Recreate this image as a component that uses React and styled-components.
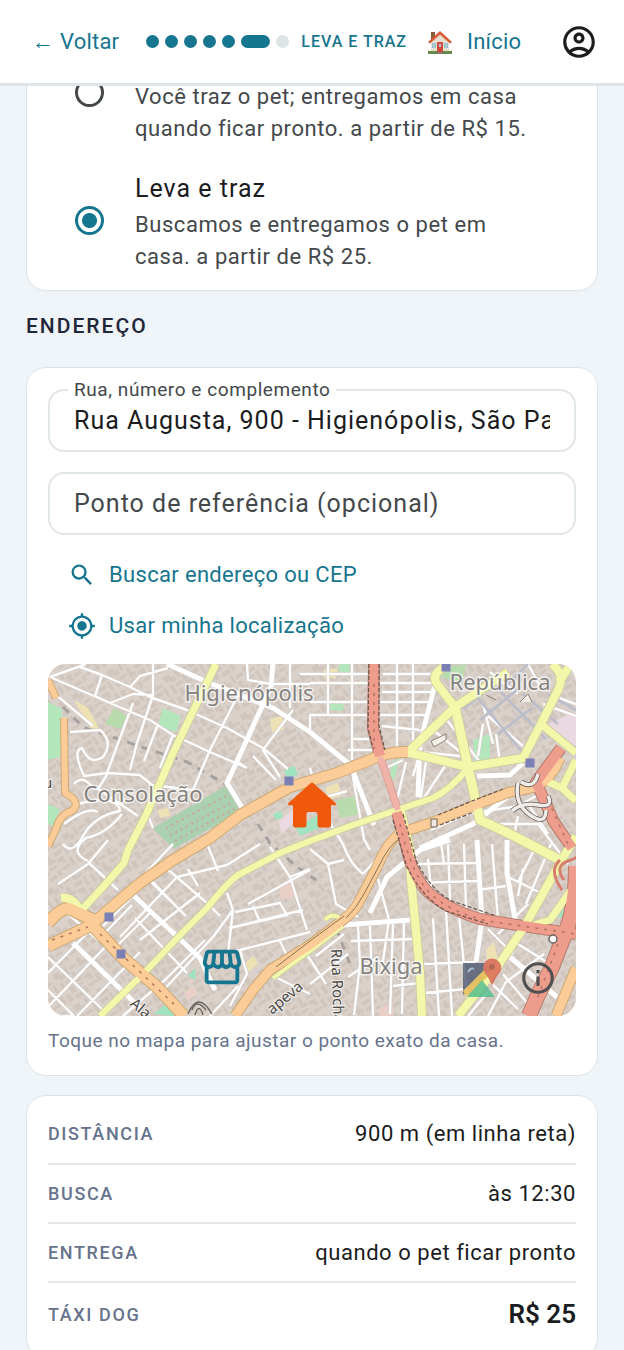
import React, { useState } from "react";
import styled, { createGlobalStyle } from "styled-components";
import {
  MdOutlineAccountCircle,
  MdSearch,
  MdMyLocation,
  MdOutlineStorefront,
  MdInfoOutline,
} from "react-icons/md";

const GlobalStyle = createGlobalStyle`
  :root {
    --primary: #16758f;
    --text: #1b1c1e;
    --text-soft: #44484b;
    --muted: #66738c;
    --line: #e1e6e8;
    --background: #eff4f8;
  }
  * {
    box-sizing: border-box;
  }
  body {
    margin: 0;
    background: var(--background);
    color: var(--text);
    font-family: Roboto, "Liberation Sans", sans-serif;
    font-size: 22px;
  }
  button, input {
    font: inherit;
  }
`;

const TOTAL_STEPS = 7;
const CURRENT_STEP = 5;

const OPTIONS = [
  {
    id: "traz",
    text: "Você traz o pet; entregamos em casa quando ficar pronto. a partir de R$ 15.",
  },
  {
    id: "leva-e-traz",
    name: "Leva e traz",
    text: "Buscamos e entregamos o pet em casa. a partir de R$ 25.",
  },
];

const SUMMARY = [
  { label: "Distância", value: "900 m (em linha reta)" },
  { label: "Busca", value: "às 12:30" },
  { label: "Entrega", value: "quando o pet ficar pronto" },
  { label: "Táxi dog", value: "R$ 25", total: true },
];

const App = () => {
  const [option, setOption] = useState("leva-e-traz");
  const [street, setStreet] = useState(
    "Rua Augusta, 900 - Higienópolis, São Paulo"
  );
  const [reference, setReference] = useState("");

  return (
    <>
      <GlobalStyle />
      <Header>
        <NavLink href="#voltar">← Voltar</NavLink>
        <Steps>
          {Array.from({ length: TOTAL_STEPS }, (_, i) => (
            <Step key={i} $current={i === CURRENT_STEP} $todo={i > CURRENT_STEP} />
          ))}
        </Steps>
        <StepName>Leva e traz</StepName>
        <HomeLink href="#inicio">
          <HouseEmoji />
          Início
        </HomeLink>
        <Account type="button" aria-label="Conta">
          <MdOutlineAccountCircle size={38} />
        </Account>
      </Header>

      <Main>
        <OptionsCard>
          {OPTIONS.map(({ id, name, text }) => (
            <Option key={id}>
              <Radio
                type="radio"
                name="transporte"
                checked={option === id}
                onChange={() => setOption(id)}
              />
              <OptionText>
                {name && <OptionName>{name}</OptionName>}
                <span>{text}</span>
              </OptionText>
            </Option>
          ))}
        </OptionsCard>

        <SectionTitle>Endereço</SectionTitle>

        <Card>
          <Field>
            <FloatingLabel htmlFor="rua">Rua, número e complemento</FloatingLabel>
            <Input
              id="rua"
              value={street}
              onChange={(e) => setStreet(e.target.value)}
            />
          </Field>
          <Field>
            <Input
              aria-label="Ponto de referência (opcional)"
              placeholder="Ponto de referência (opcional)"
              value={reference}
              onChange={(e) => setReference(e.target.value)}
            />
          </Field>
          <Actions>
            <TextButton type="button">
              <MdSearch size={28} />
              Buscar endereço ou CEP
            </TextButton>
            <TextButton type="button">
              <MdMyLocation size={28} />
              Usar minha localização
            </TextButton>
          </Actions>
          <MapBox>
            <StreetMap />
            <HomePin />
            <StorePin size={46} />
            <InfoButton type="button" aria-label="Créditos do mapa">
              <MdInfoOutline size={38} />
            </InfoButton>
          </MapBox>
          <Hint>Toque no mapa para ajustar o ponto exato da casa.</Hint>
        </Card>

        <SummaryCard>
          {SUMMARY.map(({ label, value, total }) => (
            <SummaryRow key={label}>
              <SummaryLabel>{label}</SummaryLabel>
              <SummaryValue $total={total}>{value}</SummaryValue>
            </SummaryRow>
          ))}
        </SummaryCard>
      </Main>
    </>
  );
};
export default App;

/* ---------- header ---------- */

const Header = styled.header`
  position: sticky;
  top: 0;
  z-index: 2;
  display: flex;
  align-items: center;
  height: 86px;
  padding: 0 26px 0 32px;
  background: white;
  border-bottom: 3px solid #dfe4e6;
`;

const NavLink = styled.a`
  color: var(--primary);
  letter-spacing: 0.01em;
  text-decoration: none;
  white-space: nowrap;
`;

const HomeLink = styled(NavLink)`
  display: flex;
  align-items: center;
  gap: 14px;
  margin-left: 20px;
`;

const Steps = styled.div`
  display: flex;
  gap: 6px;
  margin-left: 27px;
`;

const Step = styled.span`
  width: ${({ $current }) => ($current ? 29 : 13)}px;
  height: 13px;
  border-radius: 7px;
  background: ${({ $todo }) => ($todo ? "#dbe5e6" : "var(--primary)")};
`;

const StepName = styled.span`
  margin-left: 12px;
  color: var(--primary);
  font-size: 16px;
  font-weight: 500;
  letter-spacing: 1px;
  text-transform: uppercase;
  white-space: nowrap;
`;

const Account = styled.button`
  display: flex;
  margin-left: auto;
  padding: 0;
  border: none;
  background: none;
  color: var(--text);
`;

/* ---------- cards ---------- */

const Main = styled.main`
  /* the list continues underneath the sticky header */
  margin-top: -58px;
  padding: 0 26px 26px;
`;

const Card = styled.section`
  display: flex;
  flex-direction: column;
  padding: 21px;
  background: white;
  border: 1px solid #dce3e6;
  border-radius: 20px;
`;

const OptionsCard = styled(Card)`
  gap: 23px;
  padding: 11px 48px 17px;
`;

const SectionTitle = styled.h2`
  margin: 20px 0 26px;
  color: #1f2738;
  font-size: 21px;
  line-height: 30px;
  font-weight: 500;
  letter-spacing: 2px;
  text-transform: uppercase;
`;

const Option = styled.label`
  display: flex;
  align-items: center;
  gap: 31px;
  cursor: pointer;
`;

const Radio = styled.input`
  appearance: none;
  flex: none;
  width: 29px;
  height: 29px;
  margin: 0;
  border: 3px solid var(--text-soft);
  border-radius: 50%;
  &:checked {
    border-color: var(--primary);
    background: radial-gradient(circle, var(--primary) 7px, transparent 8px);
  }
`;

const OptionText = styled.span`
  display: flex;
  flex-direction: column;
  justify-content: flex-end;
  min-height: 105px;
  max-width: 400px;
  color: var(--text-soft);
  line-height: 32px;
  letter-spacing: 0.025em;
`;

const OptionName = styled.span`
  color: var(--text);
  font-size: 25px;
  line-height: 41px;
  letter-spacing: 1px;
`;

/* ---------- address ---------- */

const Field = styled.div`
  position: relative;
  margin-bottom: 20px;
`;

const FloatingLabel = styled.label`
  position: absolute;
  top: -11px;
  left: 20px;
  padding: 0 6px;
  background: white;
  color: var(--text-soft);
  font-size: 19px;
  line-height: 24px;
  letter-spacing: 0.03em;
`;

const Input = styled.input`
  display: block;
  width: 100%;
  height: 63px;
  padding: 0 24px;
  border: 2px solid var(--line);
  border-radius: 16px;
  outline: none;
  background: white;
  color: var(--text);
  font-size: 25px;
  letter-spacing: 1px;
  &::placeholder {
    color: var(--text-soft);
    opacity: 1;
  }
  &:focus {
    border-color: var(--primary);
  }
`;

const Actions = styled.div`
  display: flex;
  flex-direction: column;
  align-items: flex-start;
  margin: -6px 0 13px 20px;
`;

const TextButton = styled.button`
  display: flex;
  align-items: center;
  gap: 13px;
  height: 51px;
  padding: 0;
  border: none;
  background: none;
  color: var(--primary);
  letter-spacing: 0.015em;
  cursor: pointer;
`;

const MapBox = styled.div`
  position: relative;
  overflow: hidden;
  border-radius: 18px;
  & > svg:first-child {
    display: block;
    width: 100%;
    height: auto;
  }
`;

const StorePin = styled(MdOutlineStorefront)`
  position: absolute;
  left: 33%;
  top: 86%;
  transform: translate(-50%, -50%);
  color: var(--primary);
  path[fill="none"] {
    stroke: none;
  }
`;

const HomeSvg = styled.svg`
  position: absolute;
  left: 50%;
  top: 40%;
  width: 50px;
  height: 46px;
  transform: translate(-50%, -50%);
  fill: #f0580c;
`;

const InfoButton = styled.button`
  position: absolute;
  right: 19px;
  bottom: 19px;
  display: flex;
  padding: 0;
  border: none;
  background: none;
  color: #505050;
`;

const Hint = styled.p`
  margin: 12px 0 0;
  color: var(--muted);
  font-size: 19px;
  line-height: 26px;
  letter-spacing: 0.025em;
`;

/* ---------- summary ---------- */

const SummaryCard = styled(Card)`
  margin-top: 19px;
  padding: 8px 21px 12px;
`;

const SummaryRow = styled.div`
  display: flex;
  align-items: center;
  justify-content: space-between;
  height: 59px;
  & + & {
    border-top: 2px solid #e4e7ea;
  }
  &:last-child {
    height: 64px;
  }
`;

const SummaryLabel = styled.span`
  color: var(--muted);
  font-size: 18px;
  font-weight: 500;
  letter-spacing: 0.09em;
  text-transform: uppercase;
`;

const SummaryValue = styled.span`
  font-size: ${({ $total }) => ($total ? 26 : 22)}px;
  font-weight: ${({ $total }) => ($total ? 600 : 400)};
  letter-spacing: ${({ $total }) => ($total ? "normal" : "0.025em")};
`;

/* ---------- drawings ---------- */

const HouseEmoji = () => (
  <svg width="26" height="26" viewBox="0 0 26 26" aria-hidden="true">
    <path d="M4 3h4v9H4z" fill="#8a5a3c" />
    <path d="M4 12 13 4l9 8v11H4z" fill="#e6e0d2" />
    <path d="M1 13 13 2l12 11-2 1.500L13 5.500 3 14.500z" fill="#d95b35" />
    <path d="M10 13h6v11h-6z" fill="#cf4b3c" />
    <path d="M12 15h2v3h-2z" fill="#a6cdd8" />
    <path d="M5 14h4v5H5zM17 14h4v5h-4z" fill="#8fbccb" />
    <path d="M7 14v5M19 14v5" stroke="#e6e0d2" strokeWidth="0.800" />
    <path d="M1 22h9v3H1zM16 22h9v3h-9z" fill="#638b4c" />
    <path d="M10 23h6v2h-6z" fill="#8c7467" />
  </svg>
);

const HomePin = () => (
  <HomeSvg viewBox="0 0 50 46" aria-hidden="true">
    <path d="M23.500 1.200q1.500-1.300 3 0L48.500 21q1.500 2-1 2.300H44V43q0 2.500-2.500 2.500H33q-2.500 0-2.500-2.500V32q0-2-2-2h-7q-2 0-2 2v11q0 2.500-2.500 2.500H8.500Q6 45.500 6 43V23.300H2.500q-2.500-.3-1-2.300z" />
  </HomeSvg>
);

const ORANGE = { color: "#fbcc97", edge: "#cdaa76" };
const YELLOW = { color: "#f3f7a9", edge: "#cdcea6" };
const RED = { color: "#ee9c8c", edge: "#b57d6e" };

const AVENUES = [
  { ...YELLOW, w: 8, d: "M168 0 152 33 125 89 99 149 80 186 76 199 55 223 32 248" },
  { ...YELLOW, w: 7, d: "M52 352 99 306 135 268 159 244Q178 220 190 211L232 189 262 177 305 161 355 144 385 134Q402 126 420 104" },
  { ...YELLOW, w: 9, d: "M352 143 362 186 363 216 367 256 372 309 374 352" },
  { ...YELLOW, w: 9, d: "M358 90 407 43 389 20Q384 12 392 6L398 0M407 43 442 20 460 8" },
  { ...YELLOW, w: 10, d: "M407 43 420 103 425 125 432 156 462 170 512 196" },
  { ...YELLOW, w: 9, d: "M358 88 420 103 475 94 493 60 511 24Q516 12 507 3L504 0M511 18 523 0" },
  { ...YELLOW, w: 8, d: "M493 60 528 89M528 96 514 124 496 116M514 124 528 137" },
  { ...YELLOW, w: 9, d: "M528 172 512 199 475 265 449 303 410 352" },
  { ...YELLOW, w: 8, d: "M528 219 502 256 479 263" },
  { ...YELLOW, w: 5, d: "M225 314 262 287 295 262M277 256Q284 248 293 255" },
  { ...YELLOW, w: 9, d: "M13 234Q24 232 32 246L44 256" },
  { ...ORANGE, w: 7, d: "M0 16 8 34M16 54 17 129Q34 138 24 147 12 150 8 165L0 182" },
  { ...ORANGE, w: 11, d: "M360 88Q340 87 322 96L289 109 242 123 192 151 162 174 125 196 92 219 45 259" },
  { ...ORANGE, w: 12, d: "M0 259Q16 240 24 246L46 256M0 282 44 261 75 294 109 323 136 352" },
  { ...ORANGE, w: 10, d: "M187 352 205 326 222 306 262 281 295 256Q307 247 313 234L329 203Q338 180 352 169L385 158 422 143 462 128 488 123Q505 113 512 94" },
  { ...ORANGE, w: 10, d: "M528 304 508 352" },
  { ...RED, w: 11, d: "M326 0 325 65 332 92" },
  { color: "#f1b3a8", edge: "#d8a39a", w: 7, d: "M332 93 341 119 350 146" },
  { ...RED, w: 11, d: "M349 148 358 182Q364 213 382 230 400 245 432 255L475 262 528 270" },
  { ...RED, w: 15, d: "M528 202Q528 245 516 272L504 303 489 333 481 352" },
  { ...RED, w: 11, d: "M513 84 488 118 506 158 524 184" },
];

const MAIN_STREETS =
  "M119 0 159 18 225 44 262 68 301 100M223 23 179 119 196 147M225 0 223 23M389 13 372 79 370 133M85 231 152 294 167 326M25 279 92 344M429 176 434 256 428 298M459 176 459 209 470 272M462 293 509 333M322 249 339 213 372 186 402 176M302 100 326 161M295 261 362 256M429 112 462 111 475 99M372 184 425 160 460 132";

const STREETS =
  "M2 13 62 39 102 56 125 71 162 88 199 104M32 3 54 11 82 23 102 33 139 46 179 64 215 84M105 0 105 31 89 79 82 106M85 39 59 109 92 111 104 121 145 126M189 33 162 86 145 126M199 0 200 16 223 20 262 20M245 46 215 86 232 113M62 39 85 30 105 31M54 11 47 32 62 39M2 13 38 0M82 23 92 12 120 4M7 30 45 62M22 68 52 66Q66 78 55 93 42 102 34 84 24 86 36 112L59 109M110 60 96 97M125 71 112 104M199 104 188 97M215 84 240 105M205 92 228 116M104 121 99 149 105 164M30 140Q70 130 72 147 46 152 35 172T15 180M60 109 50 125 90 152M26 120Q35 110 45 124M16 160Q40 142 50 148M74 150Q58 170 38 174 20 188 40 197" +
  "M262 19 389 19M262 38 384 38M262 51 381 51M280 0 280 50M304 0 304 96M349 0 349 88M365 0 365 86M334 62 372 66M262 68 262 50M304 75 326 75M300 86 330 86M242 0 242 44M252 10 325 10M335 10 389 10M334 28 386 28M262 104 275 148 295 180M275 134 299 127M305 113 316 175 322 186M358 98 348 140M340 103 355 96M372 88 365 112M379 90 372 140M399 99 372 140" +
  "M117 203 159 239 172 252M87 254 139 309M0 293 55 346M0 326 26 352M29 352 92 288M0 309 72 236 125 180M72 273 129 213 179 201 212 180M92 276 152 229M109 333 165 273 185 246 179 229M24 352 0 352M0 343 62 278M10 220 40 200 60 176M20 250 50 276 84 241M40 198 70 226M100 213 130 244M55 262 95 222M63 288 104 247M118 315 157 276M75 352 118 315M103 218 138 252M160 182 170 207M140 205 150 222" +
  "M185 246 180 289M187 248 232 239 239 251 182 264 255 246M205 242 212 258M242 213 259 266M192 286 262 268M222 183 242 213 262 205M200 240 262 206M232 277 239 292M179 289 192 286 199 310 182 342M162 352 190 322M219 309 262 330M252 280 278 320M268 292 296 270M280 200 288 240 310 253M262 185 280 200 296 196M295 180Q302 200 315 210M335 188 315 210" +
  "M365 200 430 199M366 219 430 217M303 277 366 275M330 215 341 256 333 310M310 262 312 300 306 351M322 262 325 352M345 260 342 350M356 256 354 350M385 254 391 352M398 246 404 352M411 252 420 340M375 300 428 298M345 322 372 319M376 329 418 325M380 195 383 225M400 180 402 236M416 180 418 244M444 180 450 256M430 226 458 222M458 212 491 228M475 205 470 232M503 180 478 240M486 186 470 218M440 265 465 290M450 270 480 240M455 310 490 352M440 316 470 345M440 352 458 318 496 290M470 280 505 302M420 352 440 328M300 313 330 293M262 320 300 290" +
  "M392 172 396 200M383 166 420 150 470 142 492 130M440 160 490 160 520 200M470 152 466 172M480 140 500 170M435 40 445 80M398 55 432 98M412 92 372 88M385 66 415 90M435 60 430 92M448 70 452 98M440 52 475 82M495 40 528 52M500 30 528 40M480 0 492 22M442 8 470 30";

const WALKWAYS =
  "M429 33 475 89M432 56 469 26M450 70 485 43M445 20 498 75M415 45 445 22M475 30 510 60M500 30 528 46M455 25 480 0";

const RAIL =
  "M15 43 35 63 79 78 139 98 179 121M210 160 222 179 249 203 268 216M288 264 302 300";

const METRO_STOPS = [
  [241, 117],
  [398, 3],
  [482, 99],
  [61, 253],
  [73, 290],
];

const PARKS = [
  { fill: "#aad0b0", d: "M105 164 179 121 196 146 125 185Z" },
  { fill: "#b9dcae", d: "M66 44 81 53 73 65 57 60ZM385 5 418 0 414 20 396 14ZM288 136 308 132 312 150 292 154Z" },
  { fill: "#b4e6bb", d: "M115 44 133 52 128 68 110 62ZM0 38 14 45 14 92 0 96ZM0 140 12 145 6 162 0 160ZM282 39 296 36 295 47 281 46ZM292 0 301 0 302 9 290 7ZM344 98 352 94 346 116 342 112ZM425 76 442 70 442 96 426 98Z" },
  { fill: "#9fe3c0", d: "M236 106 246 102 250 110 240 116ZM225 150 233 147 235 153 228 156ZM248 164 272 150 276 162 252 172ZM510 252 518 242 520 256ZM140 312 147 304 148 316ZM106 350 118 340 126 352Z" },
  { fill: "#ead9e0", d: "M230 158 250 142 254 150 234 170ZM500 60 528 48 528 82 514 74Z" },
  { fill: "#eee2b4", d: "M222 55 234 52 236 66 224 68ZM26 36 40 44 52 66 44 66ZM277 124 290 119 294 132 280 136ZM438 286 446 278 450 296 440 304ZM196 300 206 292 210 300 200 308ZM110 146 120 144 122 152 112 154ZM276 6 290 4 288 14 276 14Z" },
  { fill: "#e9cfc6", d: "M230 222 242 218 248 232 234 236ZM136 328 146 322 150 330 140 336ZM330 345 345 338 345 352 332 352Z" },
];

const PLACES = [
  { name: "Higienópolis", x: 201, y: 37 },
  { name: "República", x: 452, y: 26 },
  { name: "Consolação", x: 95, y: 138 },
  { name: "Bixiga", x: 343, y: 310 },
];

const StreetMap = () => (
  <svg viewBox="0 0 528 352" role="img" aria-label="Mapa do endereço">
    <defs>
      <pattern
        id="buildings"
        width="43"
        height="37"
        patternUnits="userSpaceOnUse"
        patternTransform="rotate(-34)"
      >
        <path
          d="M1 2h7v4h4v5H6V8H1zM14 1h3v9h-3zM19 4h8v3h-8zM29 1h5v5h6v3H29zM2 13h4v9H2zM8 14h8v3H8zM18 10h4v7h3v4h-7zM27 12h9v4h-9zM38 11h3v10h-3zM8 20h5v8H8zM15 23h8v3h-8zM27 19h7v7h-4v-3h-3zM1 26h5v8H1zM9 31h9v4H9zM20 29h4v6h-4zM26 29h10v3H26zM37 24h4v9h-4z"
          fill="#cabdb3"
        />
      </pattern>
    </defs>
    <rect width="528" height="352" fill="#dad1ca" />
    <rect width="528" height="352" fill="url(#buildings)" opacity=".55" />
    {PARKS.map(({ fill, d }) => (
      <path key={d} d={d} fill={fill} />
    ))}
    <path
      d="M118 164 180 131M122 171 185 138M127 177 188 144"
      stroke="#c9a698"
      strokeWidth="2"
      strokeDasharray="2 4"
    />
    <g fill="none" strokeLinejoin="round">
      <path d={RAIL} stroke="#8f8f90" strokeWidth="3" strokeDasharray="8 7" opacity=".7" />
      <path d={STREETS} stroke="#d0c9c4" strokeWidth="3.400" />
      <path d={MAIN_STREETS} stroke="#d0c9c4" strokeWidth="6" />
      <path d={STREETS} stroke="#fdfdfd" strokeWidth="2.400" />
      <path d={WALKWAYS} stroke="#bcbdcb" strokeWidth="2.600" />
      <path d={MAIN_STREETS} stroke="#fff" strokeWidth="5" />
      {AVENUES.map(({ d, edge, w }) => (
        <path key={d} d={d} stroke={edge} strokeWidth={w + 1} />
      ))}
      {AVENUES.map(({ d, color, w }) => (
        <path key={d} d={d} stroke={color} strokeWidth={w - 1} />
      ))}
      {/* tunnels and lane marks */}
      <path
        d="M321 0 320 64 325 84M331 0 331 62 337 86M355 150 368 196Q382 226 404 237L448 252M345 156 358 200Q372 232 398 247L440 260M390 151 424 137 455 125M392 161 424 149"
        stroke="#6b574e"
        strokeWidth="1.200"
        strokeDasharray="4 2"
      />
      <path
        d="M326 20 326 85M352 160Q364 213 384 231T440 257L528 270M510 280 488 338M500 136 520 180M4 276 40 263 M52 270 130 344"
        stroke="#b77163"
        strokeWidth="1.500"
        strokeDasharray="3 6"
      />
      <path
        d="M228 303 262 277 296 252M298 254Q308 245 316 230L332 200Q340 183 352 174"
        stroke="#8a7250"
      />
      {/* flyover ramps */}
      <g stroke="#675f5b" strokeWidth="5">
        <path d="M470 119Q466 140 482 151T498 146M473 118Q486 126 490 110M464 147Q474 138 490 141T500 132" />
      </g>
      <g stroke="#f0ece9" strokeWidth="3.400">
        <path d="M470 119Q466 140 482 151T498 146M473 118Q486 126 490 110M464 147Q474 138 490 141T500 132" />
      </g>
      <path d="M516 216Q506 202 520 197T528 190M514 226Q500 206 512 196" stroke="#d77f6f" strokeWidth="3" />
      <circle cx="505" cy="275" r="4" stroke="#6b625c" strokeWidth="1.500" fill="#fff" />
      <path d="M383 77 398 70 398 76 386 83ZM438 31 448 36M472 38 480 30 484 38" stroke="#8e8078" fill="#f4efe9" />
      <rect x="383" y="155" width="6" height="8" stroke="#6d6259" fill="#eee7de" />
      <path d="M144 346Q148 334 158 346M147 351Q151 338 155 351M140 350Q150 326 164 350" stroke="#6c6965" strokeWidth="1.500" />
    </g>
    {METRO_STOPS.map(([x, y]) => (
      <rect key={x} x={x - 4.5} y={y - 4.5} width="9" height="9" fill="#7a7fb5" />
    ))}
    <PlaceNames>
      {PLACES.map(({ name, x, y }) => (
        <text key={name} x={x} y={y} textAnchor="middle">
          {name}
        </text>
      ))}
    </PlaceNames>
    <StreetNames>
      <text x="-5" y="124">u</text>
      <text transform="translate(283 285) rotate(88)">Rua Rocha</text>
      <text transform="translate(81 341) rotate(40)">Ala</text>
      <text transform="translate(224 351) rotate(-40)">apeva</text>
    </StreetNames>
    <g opacity=".8">
      <path d="M415 299h28l-28 32z" fill="#4c5870" />
      <path d="M415 327 441 301 445 308 418 333z" fill="#e8bd4b" />
      <path d="M419 333 434 316 447 333z" fill="#4dbb8b" />
      <path d="M444 322Q441 314 437 309A9 9 0 1 1 452 308Q447 314 444 322z" fill="#d9604e" />
      <circle cx="444" cy="303" r="3" fill="#a84b3f" />
      <path d="M420 308q3-5 6-3" stroke="#9db9d6" strokeWidth="2" fill="none" />
    </g>
  </svg>
);

const PlaceNames = styled.g`
  font-family: "Noto Sans", sans-serif;
  font-size: 22px;
  fill: #85827f;
  stroke: rgba(255, 255, 255, 0.7);
  stroke-width: 3px;
  paint-order: stroke;
`;

const StreetNames = styled.g`
  font-family: "Noto Sans", sans-serif;
  font-size: 15px;
  fill: #4a4846;
  stroke: rgba(255, 255, 255, 0.7);
  stroke-width: 2px;
  paint-order: stroke;
`;
